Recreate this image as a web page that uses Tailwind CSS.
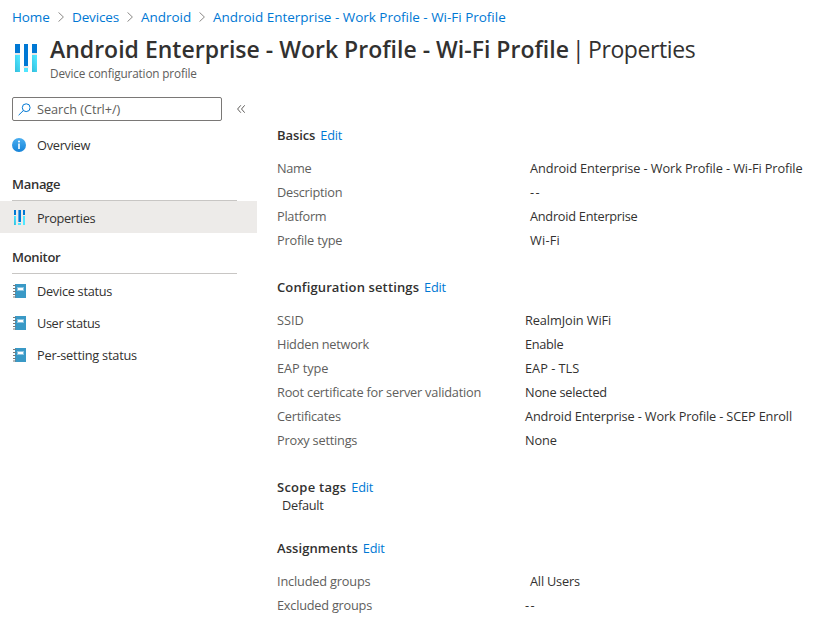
<!DOCTYPE html>
<html lang="en">
<head>
<meta charset="utf-8">
<title>Android Enterprise - Work Profile - Wi-Fi Profile | Properties</title>
<script src="https://cdn.jsdelivr.net/npm/@tailwindcss/browser@4"></script>
</head>
<body class="w-[819px] h-[631px] overflow-hidden bg-white font-['Open_Sans','Noto_Sans',sans-serif] text-[12.75px] leading-[24px] text-[#323130] whitespace-nowrap">
<svg class="absolute h-0 w-0">
  <defs>
    <linearGradient id="cyan" x1="0" y1="1" x2="0.6" y2="0"><stop offset="0" stop-color="#32bedd"/><stop offset="1" stop-color="#50e6ff"/></linearGradient>
    <linearGradient id="info" x1="0" y1="0" x2="0" y2="1"><stop offset="0" stop-color="#4aaef0"/><stop offset="1" stop-color="#1583d8"/></linearGradient>
    <symbol id="book" viewBox="0 0 14 14">
      <rect x="2" y="0" width="11" height="14" fill="#3999c6"/>
      <path d="M0 1.5h3M0 4.5h3M0 7.5h3M0 10.5h3M0 13h3" stroke="#7a7a7a"/>
      <rect x="4" y="3" width="7" height="4" fill="#8cc4e0"/>
      <rect x="5" y="4" width="5" height="2" fill="#fff"/>
    </symbol>
    <symbol id="chev" viewBox="0 0 6 10"><path d="M.5.4 5.400 5 .5 9.600" fill="none" stroke="#8a8886"/></symbol>
  </defs>
</svg>

<nav class="flex h-[34px] items-center pl-[12px] text-[13.5px] text-[#0078d4]">
  <a class="w-[46px] tracking-[-0.1px]">Home</a>
  <svg class="w-[6px] h-[10px] mr-[8px]"><use href="#chev"/></svg>
  <a class="w-[55px] tracking-[-0.15px]">Devices</a>
  <svg class="w-[6px] h-[10px] mr-[8px]"><use href="#chev"/></svg>
  <a class="w-[58px] tracking-[-0.04px]">Android</a>
  <svg class="w-[6px] h-[10px] mr-[8px]"><use href="#chev"/></svg>
  <a class="tracking-[-0.02px]">Android Enterprise - Work Profile - Wi-Fi Profile</a>
</nav>

<header class="flex h-[58px] pl-[15px]">
  <svg class="mt-[10px] mr-[13px] h-[28px] w-[22px]" viewBox="0 0 22 28">
    <path d="M0 0h5v9H0zM9 0h4v22H9zM17 0h5v9h-5z" fill="#0078d4"/>
    <path d="M0 11h5v17H0z" fill="url(#cyan)"/>
    <path d="M9 24h4v4H9z" fill="#50e6ff"/>
    <path d="M17 11h5v17h-5z" fill="url(#cyan)"/>
    <path d="M0 9h5v2H0zM8.500 22h5v2h-5zM17 9h5v2h-5z" fill="#e6e6e6"/>
  </svg>
  <div>
    <h1 class="flex h-[31px] items-center text-[23px] leading-[31px]">
      <span class="w-[522px] font-semibold tracking-[0.01px]">Android Enterprise - Work Profile - Wi-Fi Profile</span>
      <span class="w-[16px]">|</span>
      <span class="tracking-[-0.4px]">Properties</span>
    </h1>
    <p class="text-[11.75px] leading-[16px] tracking-[-0.15px] text-[#605e5c]">Device configuration profile</p>
  </div>
</header>

<div class="flex">
  <aside class="w-[257px] shrink-0 pt-[5px]">
    <div class="flex items-center pl-[12px]">
      <div class="flex h-[24px] w-[210px] items-center rounded-[2px] border border-[#7a7876] pl-[5px] text-[#605e5c]">
        <svg class="mr-[6px] h-[13px] w-[13px] shrink-0" viewBox="0 0 13 13" fill="none" stroke="#0078d4"><circle cx="8.200" cy="4.700" r="3.900"/><path d="M5.300 7.600.6 12.200"/></svg>
        <span class="tracking-[-0.06px]">Search (Ctrl+/)</span>
      </div>
      <svg class="ml-[15px] h-[8px] w-[8px]" viewBox="0 0 8 8" fill="none" stroke="#605e5c"><path d="M3.800.3.600 4l3.200 3.700M7.700.3 4.500 4l3.200 3.700"/></svg>
    </div>
    <a class="mt-[8px] flex h-[32px] items-center pl-[12px]">
      <svg class="mr-[11px] h-[14px] w-[14px]" viewBox="0 0 14 14"><circle cx="7" cy="7" r="7" fill="url(#info)"/><circle cx="7" cy="3.600" r="1" fill="#fff"/><path d="M7 5.500v5.500" stroke="#fff" stroke-width="1.600"/></svg>
      <span class="tracking-[-0.27px]">Overview</span>
    </a>
    <h2 class="ml-[12px] mt-[8px] h-[32px] w-[225px] border-b border-[#c8c6c4] leading-[31px] text-[13px] font-semibold tracking-[-0.3px]">Manage</h2>
    <a class="flex h-[32px] items-center bg-[#edebe9] pl-[13px] pt-[2px]">
      <svg class="mr-[11px] mb-[2px] h-[15px] w-[13px]" viewBox="0 0 13 15">
        <path d="M1 0h2v5H1zM5 0h3v12H5zM10 0h2v5h-2z" fill="#0078d4"/>
        <path d="M5 0h1v12H5z" fill="#5ea5e0"/>
        <path d="M1 6h2v9H1z" fill="url(#cyan)"/>
        <path d="M5 13h3v2H5zM10 6h2v9h-2z" fill="#50e6ff"/>
      </svg>
      <span class="tracking-[-0.35px]">Properties</span>
    </a>
    <h2 class="ml-[12px] mt-[9px] h-[32px] w-[225px] border-b border-[#c8c6c4] leading-[31px] text-[13px] font-semibold tracking-[-0.3px]">Monitor</h2>
    <div class="pl-[13px] pt-px">
      <a class="flex h-[32px] items-center"><svg class="mr-[10px] h-[14px] w-[14px]"><use href="#book"/></svg><span class="tracking-[-0.28px]">Device status</span></a>
      <a class="flex h-[32px] items-center"><svg class="mr-[10px] h-[14px] w-[14px]"><use href="#book"/></svg><span class="tracking-[-0.38px]">User status</span></a>
      <a class="flex h-[32px] items-center"><svg class="mr-[10px] h-[14px] w-[14px]"><use href="#book"/></svg><span class="tracking-[-0.22px]">Per-setting status</span></a>
    </div>
  </aside>

  <main class="pl-[20px] pt-[31px]">
    <section class="h-[152px]">
      <div class="mb-[9px] flex gap-[5px]"><h3 class="text-[13px] font-semibold tracking-[-0.1px]">Basics</h3><a class="text-[#0078d4] tracking-[-0.2px]">Edit</a></div>
      <dl class="grid grid-cols-[253px_auto]">
        <dt class="text-[#605e5c] tracking-[-0.3px]">Name</dt><dd class="tracking-[-0.1px]">Android Enterprise - Work Profile - Wi-Fi Profile</dd>
        <dt class="text-[#605e5c] tracking-[-0.26px]">Description</dt><dd class="tracking-[1.4px]">--</dd>
        <dt class="text-[#605e5c] tracking-[-0.26px]">Platform</dt><dd class="tracking-[-0.26px]">Android Enterprise</dd>
        <dt class="text-[#605e5c] tracking-[-0.2px]">Profile type</dt><dd class="tracking-[0.2px]">Wi-Fi</dd>
      </dl>
    </section>
    <section class="h-[200px]">
      <div class="mb-[9px] flex gap-[5px]"><h3 class="text-[13px] font-semibold tracking-[0.13px]">Configuration settings</h3><a class="text-[#0078d4] tracking-[-0.2px]">Edit</a></div>
      <dl class="grid grid-cols-[248px_auto]">
        <dt class="text-[#605e5c]">SSID</dt><dd class="tracking-[-0.08px]">RealmJoin WiFi</dd>
        <dt class="text-[#605e5c] tracking-[-0.25px]">Hidden network</dt><dd class="tracking-[-0.3px]">Enable</dd>
        <dt class="text-[#605e5c] tracking-[-0.1px]">EAP type</dt><dd>EAP - TLS</dd>
        <dt class="text-[#605e5c] tracking-[-0.21px]">Root certificate for server validation</dt><dd class="tracking-[-0.22px]">None selected</dd>
        <dt class="text-[#605e5c] tracking-[-0.24px]">Certificates</dt><dd class="tracking-[-0.15px]">Android Enterprise - Work Profile - SCEP Enroll</dd>
        <dt class="text-[#605e5c] tracking-[-0.22px]">Proxy settings</dt><dd class="tracking-[-0.1px]">None</dd>
      </dl>
    </section>
    <section class="h-[61px]">
      <div class="flex gap-[5px]"><h3 class="text-[13px] font-semibold tracking-[0.26px]">Scope tags</h3><a class="text-[#0078d4] tracking-[-0.2px]">Edit</a></div>
      <p class="-mt-[3px] pl-[5px] leading-[18px] tracking-[-0.25px]">Default</p>
    </section>
    <section>
      <div class="mb-[9px] flex gap-[5px]"><h3 class="text-[13px] font-semibold tracking-[0.08px]">Assignments</h3><a class="text-[#0078d4] tracking-[-0.2px]">Edit</a></div>
      <dl class="grid grid-cols-[248px_auto]">
        <dt class="text-[#605e5c] tracking-[-0.18px]">Included groups</dt><dd class="pl-[5px] tracking-[-0.2px]">All Users</dd>
        <dt class="text-[#605e5c] tracking-[-0.23px]">Excluded groups</dt><dd class="tracking-[1.4px]">--</dd>
      </dl>
    </section>
  </main>
</div>
</body>
</html>
